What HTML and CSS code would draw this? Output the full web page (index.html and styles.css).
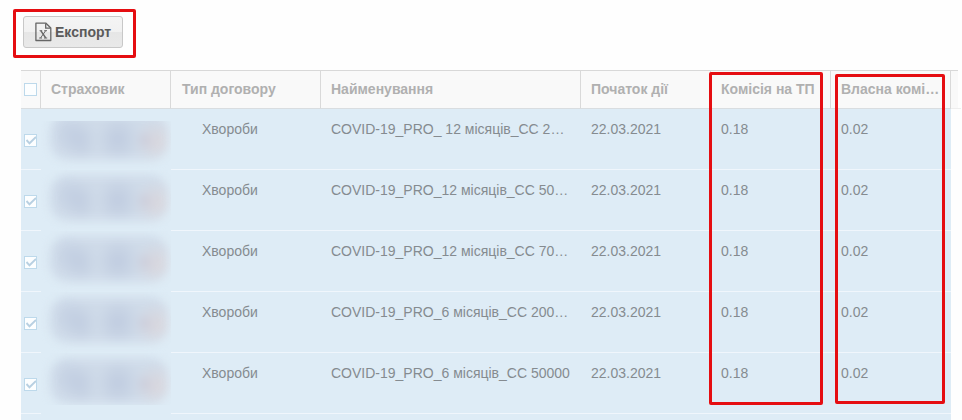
FILE: index.html
```html
<!DOCTYPE html>
<html lang="uk">
<head>
<meta charset="utf-8">
<title>Комісії</title>
<link rel="stylesheet" href="styles.css">
</head>
<body>
<div class="toolbar">
  <button class="export" type="button">
    <svg class="file" width="17" height="20" viewBox="0 0 17 20" fill="none" stroke="#666" stroke-width="1.3">
      <path d="M.9 1.2H11L15.8 6V18.5H.9Z" stroke-linejoin="round"/>
      <path d="M10.7 1.5V6.2H15.5"/>
      <path d="M4.6 8.7H7.2M9.2 8.7H12M4.2 16H7M9 16H12.2" stroke-width="1"/>
      <path d="M5.9 8.8L10.7 15.9" stroke-width="1.5"/>
      <path d="M10.6 8.8L5.6 15.9" stroke-width="1"/>
    </svg>
    <span>Експорт</span>
  </button>
</div>
<div class="grid">
  <div class="row head">
    <div class="pick"><i class="box"></i></div>
    <div>Страховик</div><div class="contract">Тип договору</div><div>Найменування</div><div>Початок дії</div><div>Комісія на ТП</div><div>Власна комі…</div><div class="rest"></div>
  </div>
  <div class="row">
    <div class="pick"><i class="box"><svg class="tick" viewBox="0 0 11 11"><path d="M1.5 5L4.5 8.3L11 2"/></svg></i></div>
    <div class="hidden-name first"><b class="smudge"></b></div><div class="type">Хвороби</div><div>COVID-19_PRO_ 12 місяців_СС 2…</div><div>22.03.2021</div><div>0.18</div><div>0.02</div>
  </div>
  <div class="row">
    <div class="pick"><i class="box"><svg class="tick" viewBox="0 0 11 11"><path d="M1.5 5L4.5 8.3L11 2"/></svg></i></div>
    <div class="hidden-name"><b class="smudge"></b></div><div class="type">Хвороби</div><div>COVID-19_PRO_12 місяців_СС 50…</div><div>22.03.2021</div><div>0.18</div><div>0.02</div>
  </div>
  <div class="row">
    <div class="pick"><i class="box"><svg class="tick" viewBox="0 0 11 11"><path d="M1.5 5L4.5 8.3L11 2"/></svg></i></div>
    <div class="hidden-name"><b class="smudge"></b></div><div class="type">Хвороби</div><div>COVID-19_PRO_12 місяців_СС 70…</div><div>22.03.2021</div><div>0.18</div><div>0.02</div>
  </div>
  <div class="row">
    <div class="pick"><i class="box"><svg class="tick" viewBox="0 0 11 11"><path d="M1.5 5L4.5 8.3L11 2"/></svg></i></div>
    <div class="hidden-name"><b class="smudge"></b></div><div class="type">Хвороби</div><div>COVID-19_PRO_6 місяців_СС 200…</div><div>22.03.2021</div><div>0.18</div><div>0.02</div>
  </div>
  <div class="row">
    <div class="pick"><i class="box"><svg class="tick" viewBox="0 0 11 11"><path d="M1.5 5L4.5 8.3L11 2"/></svg></i></div>
    <div class="hidden-name last"><b class="smudge"></b></div><div class="type">Хвороби</div><div>COVID-19_PRO_6 місяців_СС 50000</div><div>22.03.2021</div><div>0.18</div><div>0.02</div>
  </div>
  <div class="row tail"></div>
</div>
<div class="mark mark-export"></div>
<div class="mark mark-rate"></div>
<div class="mark mark-own"></div>
</body>
</html>
```

FILE: styles.css
```css
* { box-sizing: border-box; }
body {
  margin: 0;
  width: 962px;
  height: 420px;
  overflow: hidden;
  position: relative;
  background: #fefefe;
  font: 14px/18px "Liberation Sans", Arial, sans-serif;
  color: #858b90;
}
.toolbar { height: 70px; padding: 16px 0 0 23px; }
.export {
  display: flex;
  align-items: center;
  gap: 3px;
  width: 100px;
  height: 32px;
  padding: 0 0 0 11px;
  border: 1px solid #c8c8c8;
  border-radius: 3px;
  background: linear-gradient(#f4f4f4 0, #f1f1f1 50%, #e6e6e6 50%, #e9e9e9 100%);
  color: #5a5a5a;
  font: bold 14px/18px "Liberation Sans", Arial, sans-serif;
}
.file { flex: none; }
.grid { width: 937px; margin-left: 21px; }
.row {
  display: grid;
  grid-template-columns: 20px 130px 150px 260px 130px 120px 120px;
  width: 930px;
  height: 61px;
  background: #deecf6;
}
.row > div {
  padding: 11px 0 0 10px;
  border-bottom: 1px solid #f0f6fc;
  white-space: nowrap;
}
.row > .type { padding: 11px 0 0 31px; }
.row > .pick { padding: 25px 0 0 3px; }
.box {
  display: block;
  width: 13px;
  height: 13px;
  border: 1px solid #bdd9eb;
  background: #fcfeff;
}
.tick {
  display: block;
  width: 11px;
  height: 11px;
  fill: none;
  stroke: #b8d0e2;
  stroke-width: 1.9;
}
.head {
  grid-template-columns: 20px 130px 150px 260px 130px 120px 120px 7px;
  width: 937px;
  height: 39px;
  border-top: 1px solid #d8d8d8;
  background: #f9f9f9;
  color: #b0b0b0;
  font-weight: bold;
}
.head > div { padding: 9px 0 0 10px; border-right: 1px solid #d9d9d9; border-bottom: 1px solid #d9dde0; }
.head > .contract { padding-left: 11px; }
.head > .pick { padding: 12px 0 0 3px; }
.head > .rest { border-right: 0; border-bottom-color: #eee; }
.row > .hidden-name {
  height: 61px;
  padding: 5px 0 0 9px;
  border-bottom: 0;
  overflow: hidden;
}
.row > .first { height: 49px; margin-top: 12px; padding-top: 0; }
.first .smudge { margin-top: -7px; }
.row > .last { height: 52px; }
.smudge {
  display: block;
  width: 118px;
  height: 46px;
  border-radius: 18px;
  filter: blur(5px);
  background:
    radial-gradient(ellipse 8px 10px at 95px 26px, #bdb5c880, #bdb5c800),
    radial-gradient(ellipse 24px 24px at 108px 28px, #dad7dd, #dad7dd00),
    radial-gradient(ellipse 16px 22px at 18px 20px, #b9c6dd80, #b9c6dd00),
    radial-gradient(ellipse 16px 22px at 31px 26px, #b5c1d98c, #b5c1d900),
    radial-gradient(ellipse 22px 24px at 68px 25px, #b3bfd894, #b3bfd800),
    #cfdbe9;
}
.tail { height: 6px; }
.mark {
  position: absolute;
  border: 3px solid #e50d11;
  border-radius: 2px;
}
.mark-export { left: 13px; top: 9px; width: 123px; height: 49px; }
.mark-rate { left: 709px; top: 72px; width: 114px; height: 333px; }
.mark-own { left: 835px; top: 74px; width: 110px; height: 330px; }
```
